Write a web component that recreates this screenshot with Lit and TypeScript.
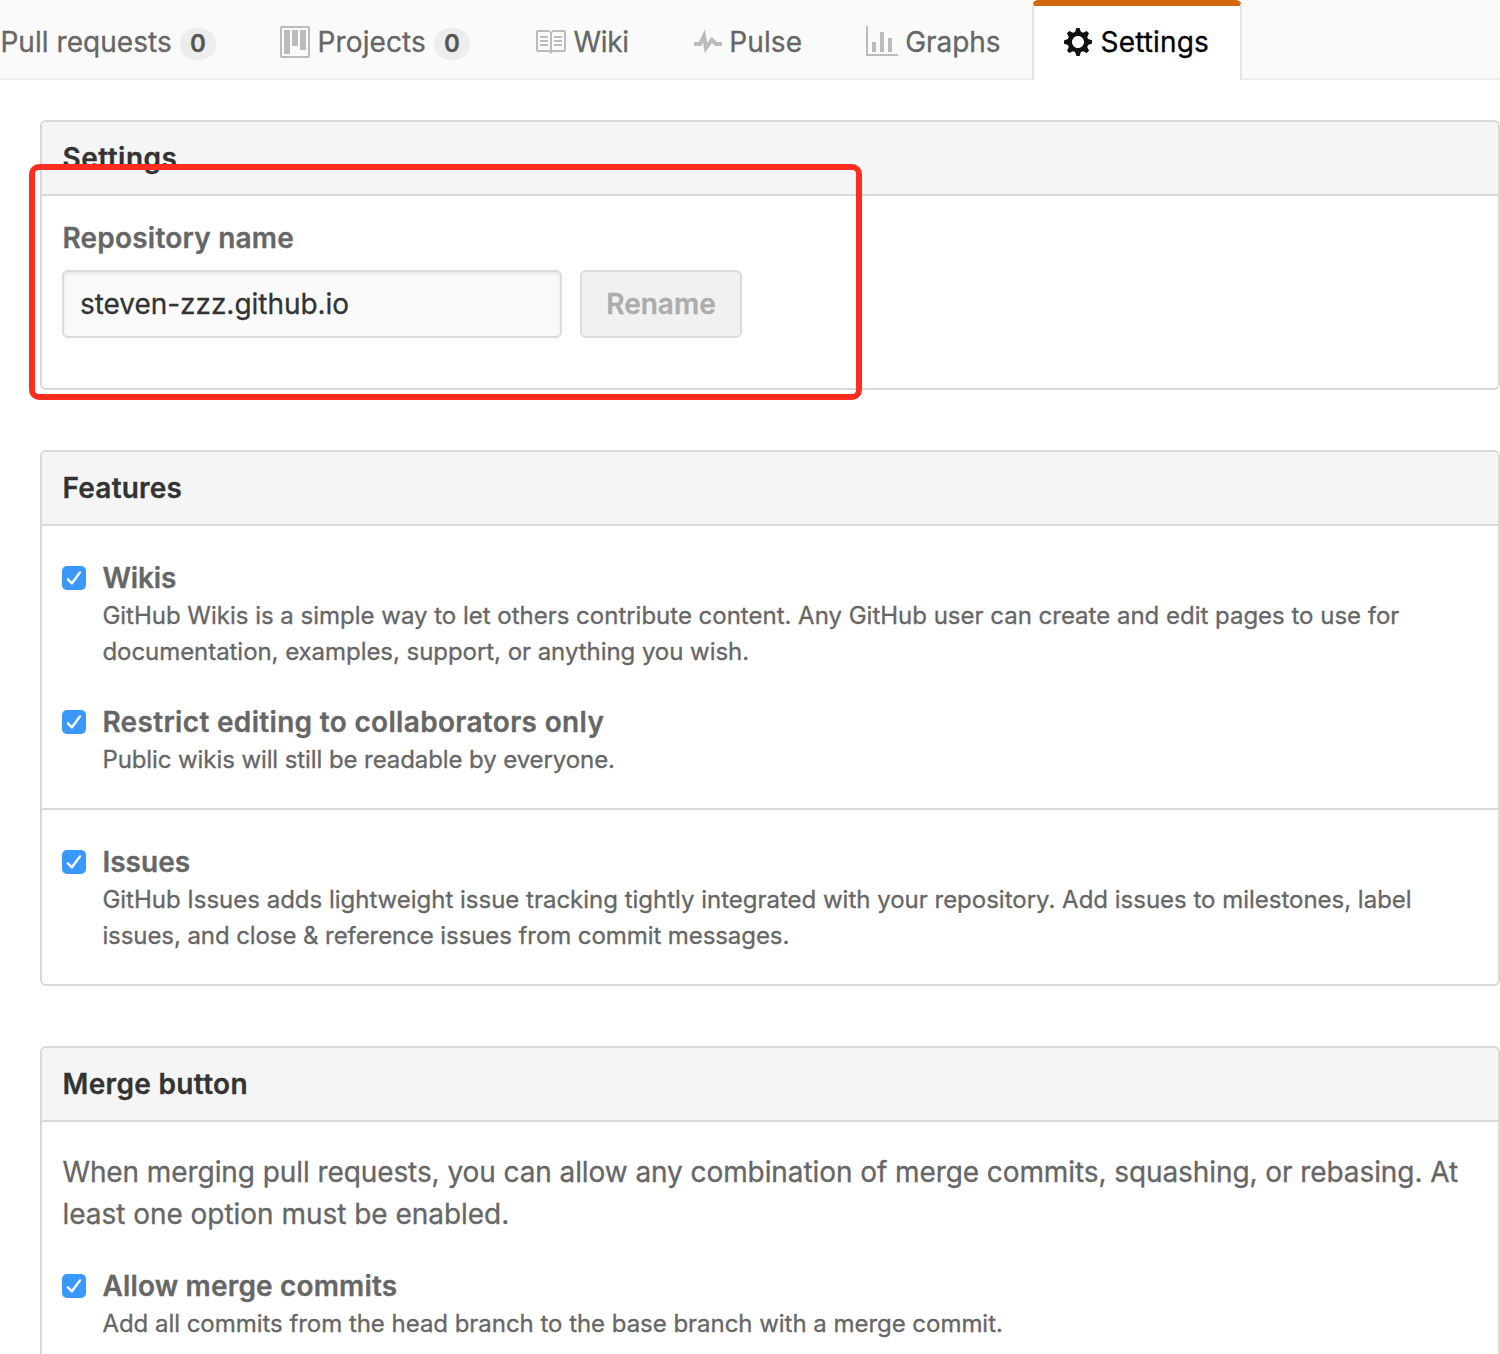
import { LitElement, html, css, svg, nothing } from "lit";
import { customElement, property } from "lit/decorators.js";
import { classMap } from "lit/directives/class-map.js";
import { styleMap } from "lit/directives/style-map.js";

/* A single run of text with its own tracking, in pixels. */
interface Line {
  text: string;
  track: number;
}

interface Icon {
  width: number;
  path: string;
}

interface Tab {
  label: Line;
  width: number;
  icon?: Icon;
  gap?: number;
  count?: number;
  selected?: boolean;
}

interface Option {
  title: Line;
  note: Line[];
}

const icons: Record<string, Icon> = {
  project: {
    width: 15,
    path: "M10 12h3V2h-3v10zm-4-2h3V2H6v8zm-4 4h3V2H2v12zm-1 1h13V1H1v14zM14 0H1a1 1 0 0 0-1 1v14a1 1 0 0 0 1 1h13a1 1 0 0 0 1-1V1a1 1 0 0 0-1-1z",
  },
  book: {
    width: 16,
    path: "M3 5h4v1H3V5zm0 3h4V7H3v1zm0 2h4V9H3v1zm11-5h-4v1h4V5zm0 2h-4v1h4V7zm0 2h-4v1h4V9zm2-6v9c0 .55-.45 1-1 1H9.5l-1 1-1-1H2c-.55 0-1-.45-1-1V3c0-.55.45-1 1-1h5.5l1 1 1-1H15c.55 0 1 .45 1 1zm-8 .5L7.5 3H2v9h6V3.5zm7-.5H9.5l-.5.5V12h6V3z",
  },
  pulse: {
    width: 14,
    path: "M11.5 8L8.8 5.4 6.6 8.5 5.5 1.6 2.38 8H0v2h3.6l.9-1.8.9 5.4L9 8.5l1.6 1.5H14V8z",
  },
  graph: {
    width: 16,
    path: "M16 14v1H0V0h1v14h15zM5 13H3V8h2v5zm4 0H7V3h2v10zm4 0h-2V6h2v7z",
  },
  gear: {
    width: 14,
    path: "M14 8.77v-1.6l-1.94-.64-.45-1.09.88-1.84-1.13-1.13-1.81.91-1.09-.45-.69-1.92h-1.6l-.63 1.94-1.11.45-1.84-.88-1.13 1.13.91 1.81-.45 1.09L0 7.23v1.59l1.94.64.45 1.09-.88 1.84 1.13 1.13 1.81-.91 1.09.45.69 1.92h1.59l.63-1.94 1.11-.45 1.84.88 1.13-1.13-.92-1.81.47-1.09L14 8.75v.02zM7 11c-1.66 0-3-1.34-3-3s1.34-3 3-3 3 1.34 3 3-1.34 3-3 3z",
  },
};

const tabs: Tab[] = [
  { label: { text: "Pull requests", track: 0.05 }, width: 248, count: 0 },
  { label: { text: "Projects", track: 0.1 }, width: 254, icon: icons.project, gap: 7.6, count: 0 },
  { label: { text: "Wiki", track: -0.3 }, width: 160, icon: icons.book, gap: 7.5 },
  { label: { text: "Pulse", track: 0.1 }, width: 172, icon: icons.pulse, gap: 7.3 },
  { label: { text: "Graphs", track: -0.08 }, width: 198, icon: icons.graph, gap: 7.3 },
  { label: { text: "Settings", track: 0.15 }, width: 210, icon: icons.gear, gap: 8.6, selected: true },
];

const wikiOptions: Option[] = [
  {
    title: { text: "Wikis", track: -0.15 },
    note: [
      {
        text: "GitHub Wikis is a simple way to let others contribute content. Any GitHub user can create and edit pages to use for",
        track: -0.01,
      },
      { text: "documentation, examples, support, or anything you wish.", track: -0.05 },
    ],
  },
  {
    title: { text: "Restrict editing to collaborators only", track: 0.319 },
    note: [{ text: "Public wikis will still be readable by everyone.", track: -0.09 }],
  },
];

const issueOptions: Option[] = [
  {
    title: { text: "Issues", track: 0.05 },
    note: [
      {
        text: "GitHub Issues adds lightweight issue tracking tightly integrated with your repository. Add issues to milestones, label",
        track: -0.01,
      },
      { text: "issues, and close & reference issues from commit messages.", track: -0.08 },
    ],
  },
];

const mergeIntro: Line[] = [
  {
    text: "When merging pull requests, you can allow any combination of merge commits, squashing, or rebasing. At",
    track: -0.083,
  },
  { text: "least one option must be enabled.", track: -0.03 },
];

const mergeOptions: Option[] = [
  {
    title: { text: "Allow merge commits", track: 0.17 },
    note: [
      { text: "Add all commits from the head branch to the base branch with a merge commit.", track: -0.035 },
    ],
  },
];

const run = (line: Line) =>
  html`<span class="run" style=${styleMap({ letterSpacing: `${line.track}px` })}>${line.text}</span>`;

const runStyle = css`
  .run {
    display: block;
    white-space: nowrap;
  }
`;

@customElement("repo-tabs")
class RepoTabs extends LitElement {
  static styles = [
    runStyle,
    css`
      :host {
        display: block;
      }
      .bar {
        display: flex;
        height: 80px;
        box-sizing: border-box;
        background: #fafafa;
        box-shadow: inset 0 -2px 0 #ececec;
      }
      .tab {
        display: flex;
        align-items: center;
        flex: none;
        box-sizing: border-box;
        height: 80px;
        padding: 4px 30px 0;
        border: 0 solid transparent;
        border-width: 0 2px;
        color: #666;
        line-height: 42px;
      }
      .tab.first {
        padding-left: 0.4px;
        border-left: 0;
      }
      .tab.selected {
        padding-top: 0;
        padding-bottom: 2px;
        border-width: 6px 2px 0;
        border-color: #d26911 #e5e5e5 transparent;
        border-radius: 6px 6px 0 0;
        background: #fff;
        color: #000;
      }
      svg {
        display: block;
        flex: none;
        height: 32px;
        fill: #bbb;
      }
      .selected svg {
        fill: #111;
      }
      .count {
        display: flex;
        align-items: center;
        justify-content: center;
        width: 36px;
        height: 32px;
        margin: 4px 0 0 8px;
        border-radius: 16px;
        background: #ededed;
        color: #555;
        font-size: 24px;
        font-weight: 600;
        line-height: 32px;
      }
    `,
  ];

  render() {
    return html`<nav class="bar">
      ${tabs.map(
        (tab, i) => html`<div
          class=${classMap({ tab: true, first: i === 0, selected: !!tab.selected })}
          style=${styleMap({ width: `${tab.width}px` })}
        >
          ${tab.icon
            ? html`<svg
                style=${styleMap({ width: `${tab.icon.width * 2}px`, marginRight: `${tab.gap}px` })}
                viewBox="0 0 ${tab.icon.width} 16"
              >
                ${svg`<path fill-rule="evenodd" d=${tab.icon.path}></path>`}
              </svg>`
            : nothing}${run(tab.label)}${tab.count === undefined
            ? nothing
            : html`<span class="count">${tab.count}</span>`}
        </div>`,
      )}
    </nav>`;
  }
}

@customElement("settings-box")
class SettingsBox extends LitElement {
  static styles = [
    runStyle,
    css`
      :host {
        display: block;
        border: 2px solid #d8d8d8;
        border-radius: 6px;
        background: #fff;
      }
      .head {
        height: 72px;
        padding-left: 20.5px;
        border-bottom: 2px solid #d8d8d8;
        border-radius: 4px 4px 0 0;
        background: #f5f5f5;
        color: #333;
        font-weight: 600;
        line-height: 72px;
      }
    `,
  ];

  @property({ attribute: false }) heading: Line = { text: "", track: 0 };

  render() {
    return html`<div class="head">${run(this.heading)}</div>
      <slot></slot>`;
  }
}

@customElement("option-list")
class OptionList extends LitElement {
  static styles = [
    runStyle,
    css`
      :host {
        display: flex;
        flex-direction: column;
        gap: 33px;
        color: #666;
      }
      .option {
        display: flex;
        gap: 16.4px;
      }
      .check {
        flex: none;
        width: 24px;
        height: 24px;
        margin-top: 7px;
      }
      .title {
        margin-bottom: 1px;
        font-weight: 600;
        line-height: 38px;
      }
      .note {
        font-size: 24px;
        line-height: 36px;
      }
    `,
  ];

  @property({ attribute: false }) options: Option[] = [];

  render() {
    return this.options.map(
      (o) => html`<div class="option">
        <svg class="check" viewBox="0 0 24 24">
          <rect width="24" height="24" rx="5" fill="#3b98fb"></rect>
          <path
            d="M5.9 13.3L9.9 17.3L18 6.4"
            fill="none"
            stroke="#fff"
            stroke-width="2.4"
            stroke-linecap="round"
            stroke-linejoin="round"
          ></path>
        </svg>
        <div>
          <div class="title">${run(o.title)}</div>
          <div class="note">${o.note.map(run)}</div>
        </div>
      </div>`,
    );
  }
}

@customElement("app-root")
class AppRoot extends LitElement {
  static styles = [
    runStyle,
    css`
      :host {
        display: block;
        position: relative;
        height: 1354px;
        overflow: hidden;
        background: #fff;
        font: 400 28px/42px Inter, "Noto Sans", sans-serif;
        -webkit-text-stroke: 0.3px currentColor;
      }
      .page {
        display: flex;
        flex-direction: column;
        gap: 60px;
        padding: 40px 0 0 40px;
      }
      .rename {
        padding: 21px 20px 50px;
      }
      .label {
        margin-bottom: 11px;
        padding-left: 0.5px;
        color: #666;
        font-weight: 600;
      }
      .row {
        display: flex;
        gap: 18px;
      }
      .field,
      .button {
        box-sizing: border-box;
        height: 68px;
        border: 2px solid #dcdcdc;
        border-radius: 6px;
        line-height: 64px;
      }
      .field {
        width: 500px;
        padding-left: 16px;
        background: #fafafa;
        box-shadow: inset 0 2px 4px rgba(0, 0, 0, 0.075);
        color: #333;
      }
      .button {
        width: 162px;
        background: #f1f1f1;
        color: #acacac;
        font-weight: 600;
        text-align: center;
      }
      .section {
        padding: 33px 20px 30px;
      }
      .section + .section {
        border-top: 2px solid #d8d8d8;
      }
      .intro {
        padding: 29px 20px 32px 20.4px;
        color: #666;
      }
      .merge {
        padding: 0 20px 30px;
      }
      .highlight {
        position: absolute;
        left: 29px;
        top: 164px;
        box-sizing: border-box;
        width: 833px;
        height: 236px;
        border: 6px solid #ff2d1f;
        border-radius: 10px;
      }
    `,
  ];

  render() {
    return html`
      <repo-tabs></repo-tabs>
      <main class="page">
        <settings-box .heading=${{ text: "Settings", track: 0.481 }}>
          <div class="rename">
            <div class="label">${run({ text: "Repository name", track: 0.2 })}</div>
            <div class="row">
              <div class="field">${run({ text: "steven-zzz.github.io", track: -0.04 })}</div>
              <div class="button">${run({ text: "Rename", track: 0.023 })}</div>
            </div>
          </div>
        </settings-box>
        <settings-box .heading=${{ text: "Features", track: 0.22 }}>
          <div class="section"><option-list .options=${wikiOptions}></option-list></div>
          <div class="section"><option-list .options=${issueOptions}></option-list></div>
        </settings-box>
        <settings-box .heading=${{ text: "Merge button", track: 0.337 }}>
          <div class="intro">${mergeIntro.map(run)}</div>
          <div class="merge"><option-list .options=${mergeOptions}></option-list></div>
        </settings-box>
      </main>
      <div class="highlight"></div>
    `;
  }
}
